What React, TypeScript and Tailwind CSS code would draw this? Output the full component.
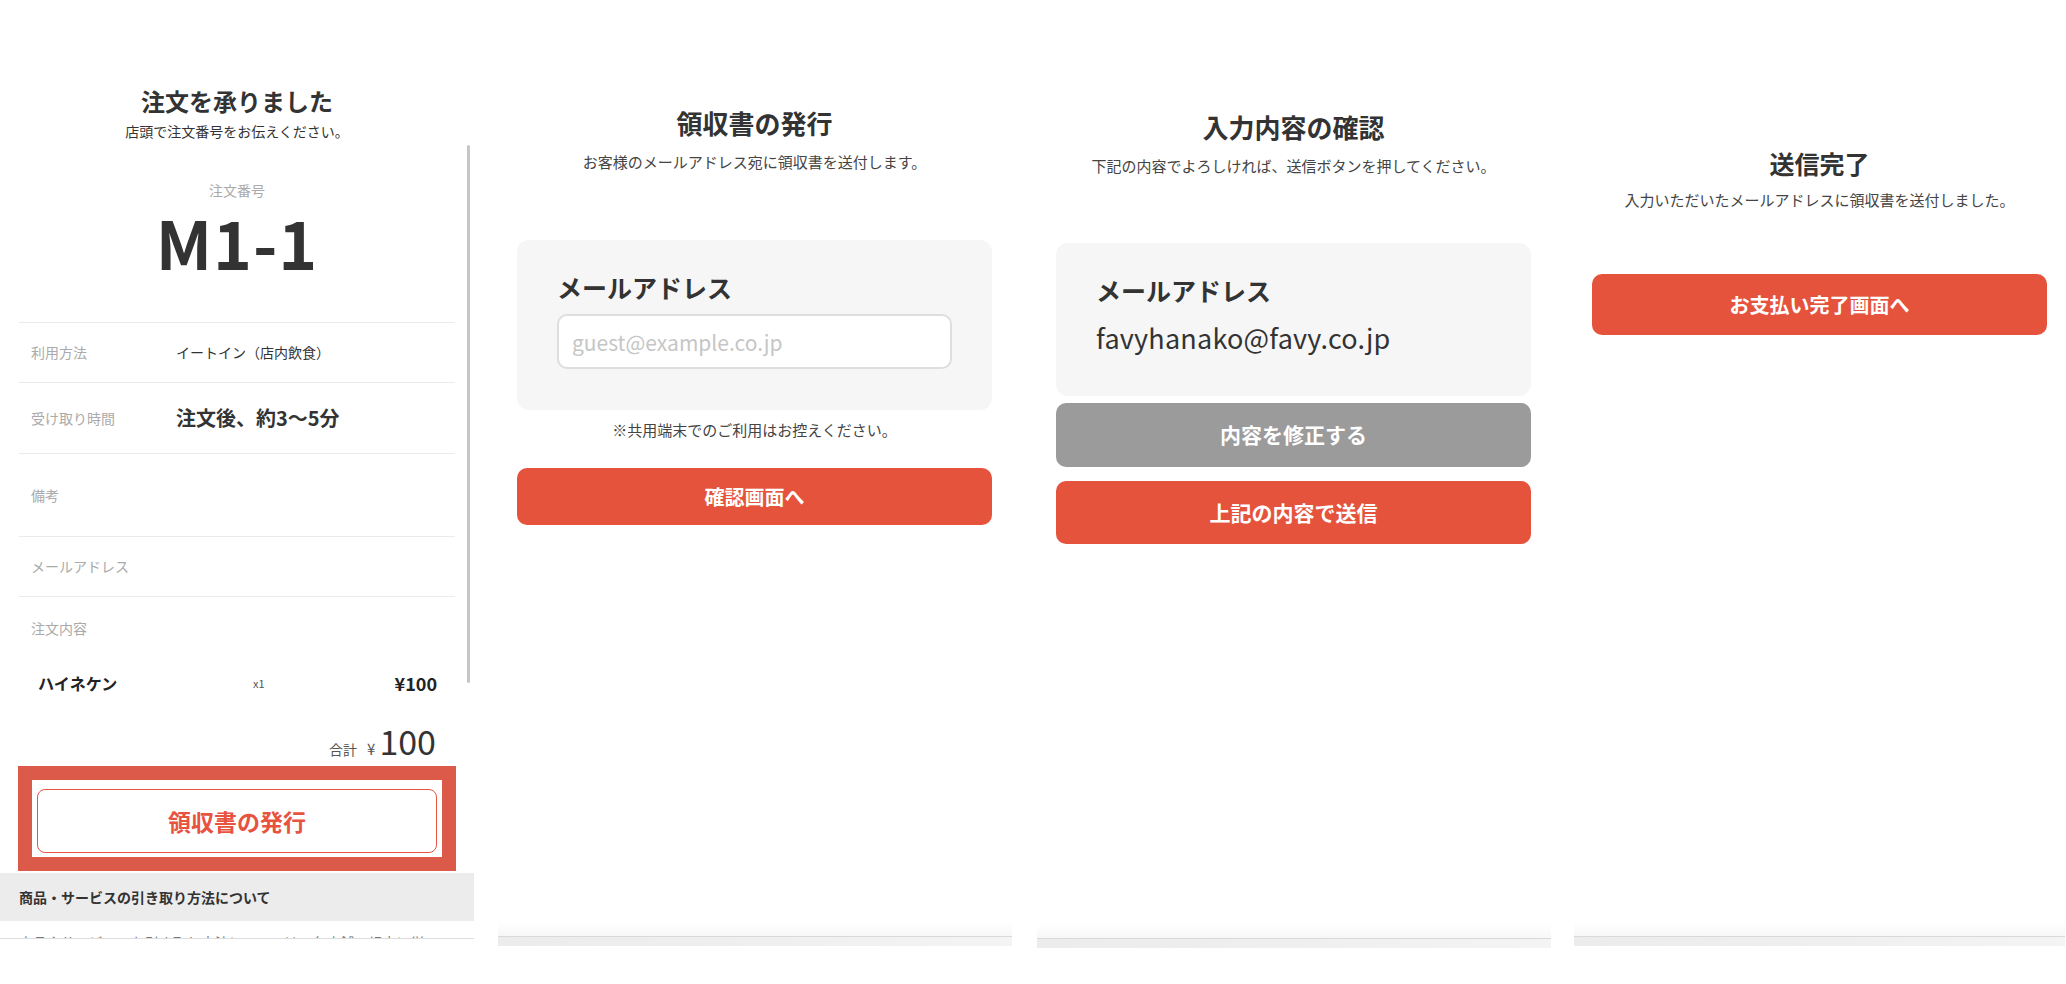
import React from "react";

const jp = "font-['Noto_Sans_CJK_JP','Noto_Sans',sans-serif]";

function BottomBar() {
  return (
    <div className="mt-auto w-full">
      <div className="h-[14px] bg-gradient-to-b from-transparent to-[#f7f7f7]" />
      <div className="h-[10px] border-t border-[#d9d9d9] bg-gradient-to-r from-[#ececec] via-[#efefef] to-[#f4f4f4]" />
    </div>
  );
}

function LeftPanel() {
  return (
    <div className="relative flex h-[984px] w-[474px] shrink-0 flex-col">
      <div className="pt-[85px] text-center">
        <h1 className="text-[24px] font-bold leading-[32px] text-[#333]">注文を承りました</h1>
        <p className="mt-[4px] text-[14px] leading-[20px] text-[#333]">店頭で注文番号をお伝えください。</p>
      </div>
      <div className="relative mt-[4px]">
        <div className="absolute right-[4px] top-0 h-[538px] w-[3px] rounded-full bg-[#c6c6c6]" />
        <div className="pt-[35px] text-center">
          <div className="text-[14px] leading-[20px] text-[#aaa]">注文番号</div>
          <div className="mt-[8px] text-[66px] font-bold leading-[66px] tracking-[1px] text-[#333]">M1-1</div>
        </div>
        <div className="mx-[19px] mt-[48px]">
          <div className="flex h-[60px] items-center border-t border-[#ebebeb]">
            <div className="w-[157px] pl-[12px] text-[14px] text-[#aaa]">利用方法</div>
            <div className="text-[14px] text-[#333]">イートイン（店内飲食）</div>
          </div>
          <div className="flex h-[71px] items-center border-t border-[#ebebeb]">
            <div className="w-[157px] pl-[12px] text-[14px] text-[#aaa]">受け取り時間</div>
            <div className="text-[20px] font-bold text-[#333]">注文後、約3〜5分</div>
          </div>
          <div className="flex h-[83px] items-center border-t border-[#ebebeb]">
            <div className="w-[157px] pl-[12px] text-[14px] text-[#aaa]">備考</div>
          </div>
          <div className="flex h-[60px] items-center border-t border-[#ebebeb]">
            <div className="w-[157px] pl-[12px] text-[14px] text-[#aaa]">メールアドレス</div>
          </div>
          <div className="border-t border-[#ebebeb] pt-[21px]">
            <div className="pl-[12px] text-[14px] leading-[20px] text-[#aaa]">注文内容</div>
            <div className="mt-[33px] flex items-center pl-[19px] pr-[18px] leading-[24px]">
              <div className="w-[215px] text-[16px] font-bold text-[#222]">ハイネケン</div>
              <div className="flex-1 text-[11px] text-[#555]">x1</div>
              <div className="text-[18px] font-bold text-[#222]">¥100</div>
            </div>
            <div className="mt-[30px] flex items-baseline justify-end pr-[19px] leading-[32px]">
              <span className="text-[14px] text-[#555]">合計</span>
              <span className="ml-[10px] mr-[4px] text-[15px] text-[#555]">¥</span>
              <span className="text-[34px] text-[#333]">100</span>
            </div>
          </div>
        </div>
        <div className="mx-[18px] mt-[1px] border-[14px] border-[#dc5a4a] bg-white px-[5px] pb-[4px] pt-[9px]">
          <button className="flex h-[64px] w-full items-center justify-center rounded-[8px] border-[1.5px] border-[#e8533f] bg-white text-[23px] font-bold text-[#e8533f]">
            領収書の発行
          </button>
        </div>
        <div className="mt-[2px] flex h-[48px] items-center bg-[#ececec] pl-[19px] text-[14px] font-bold text-[#333]">
          商品・サービスの引き取り方法について
        </div>
        <div className="h-[18px] overflow-hidden border-b border-[#dddddd] px-[19px] pt-[11px] text-[14px] leading-[20px] text-[#777]">
          商品やサービスのお引き取り方法については、各店舗の規定に従ってください。
        </div>
      </div>
    </div>
  );
}

function ReceiptPanel() {
  return (
    <div className="flex h-[946px] w-[514px] shrink-0 flex-col">
      <div className="pl-[19px] pr-[20px] pt-[106px]">
        <h2 className="text-center text-[26px] font-bold leading-[34px] text-[#333]">領収書の発行</h2>
        <p className="mt-[11px] text-center text-[15px] leading-[22px] text-[#444]">
          お客様のメールアドレス宛に領収書を送付します。
        </p>
        <div className="mt-[67px] rounded-[12px] bg-[#f6f6f6] pb-[41px] pl-[40px] pr-[40px] pt-[30px]">
          <div className="text-[25px] font-bold leading-[34px] text-[#333]">メールアドレス</div>
          <input
            className="mt-[10px] block h-[55px] w-full rounded-[10px] border-2 border-[#dedede] bg-white px-[13px] text-[21px] text-[#333] outline-none placeholder:text-[#c6c6c6]"
            placeholder="guest@example.co.jp"
          />
        </div>
        <p className="mt-[9px] text-center text-[15px] leading-[22px] text-[#444]">
          ※共用端末でのご利用はお控えください。
        </p>
        <button className="mt-[27px] flex h-[57px] w-full items-center justify-center rounded-[10px] bg-[#e5533d] text-[20px] font-bold text-white">
          確認画面へ
        </button>
      </div>
      <BottomBar />
    </div>
  );
}

function ConfirmPanel() {
  return (
    <div className="flex h-[948px] w-[514px] shrink-0 flex-col">
      <div className="pl-[19px] pr-[20px] pt-[110px]">
        <h2 className="text-center text-[26px] font-bold leading-[34px] text-[#333]">入力内容の確認</h2>
        <p className="mt-[11px] text-center text-[15px] leading-[22px] text-[#444]">
          下記の内容でよろしければ、送信ボタンを押してください。
        </p>
        <div className="mt-[66px] rounded-[12px] bg-[#f6f6f6] pb-[41px] pl-[40px] pr-[40px] pt-[30px]">
          <div className="text-[25px] font-bold leading-[34px] text-[#333]">メールアドレス</div>
          <div className="mt-[14px] text-[27px] leading-[34px] tracking-[0.2px] text-[#333]">favyhanako@favy.co.jp</div>
        </div>
        <button className="mt-[7px] flex h-[64px] w-full items-center justify-center rounded-[10px] bg-[#9b9b9b] text-[21px] font-bold text-white">
          内容を修正する
        </button>
        <button className="mt-[14px] flex h-[63px] w-full items-center justify-center rounded-[10px] bg-[#e5533d] text-[21px] font-bold text-white">
          上記の内容で送信
        </button>
      </div>
      <BottomBar />
    </div>
  );
}

function DonePanel() {
  return (
    <div className="flex h-[946px] w-[491px] shrink-0 flex-col">
      <div className="px-[18px] pt-[147px]">
        <h2 className="text-center text-[25px] font-bold leading-[32px] text-[#333]">送信完了</h2>
        <p className="mt-[10px] text-center text-[15px] leading-[22px] text-[#444]">
          入力いただいたメールアドレスに領収書を送付しました。
        </p>
        <button className="mt-[63px] flex h-[61px] w-full items-center justify-center rounded-[10px] bg-[#e5533d] text-[20px] font-bold text-white">
          お支払い完了画面へ
        </button>
      </div>
      <BottomBar />
    </div>
  );
}

export default function App() {
  return (
    <div className={`flex h-[984px] w-[2066px] overflow-hidden bg-white ${jp}`}>
      <LeftPanel />
      <div className="ml-[24px] flex">
        <ReceiptPanel />
        <div className="w-[25px] shrink-0" />
        <ConfirmPanel />
        <div className="w-[23px] shrink-0" />
        <DonePanel />
      </div>
    </div>
  );
}
